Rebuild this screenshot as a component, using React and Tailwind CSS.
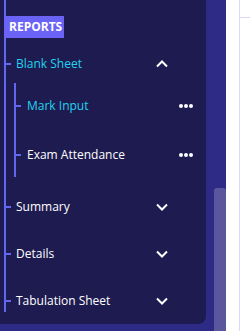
import React from "react";

const font = { fontFamily: '"Open Sans", "Noto Sans", sans-serif' };

const ChevronUp = () => (
  <svg width="12" height="8" viewBox="0 0 12 8" fill="none">
    <path d="M1 6.5 L6 1.5 L11 6.5" stroke="white" strokeWidth="2" />
  </svg>
);

const ChevronDown = () => (
  <svg width="12" height="8" viewBox="0 0 12 8" fill="none">
    <path d="M1 1.5 L6 6.5 L11 1.5" stroke="white" strokeWidth="2" />
  </svg>
);

const Dots = () => (
  <div className="flex items-center gap-[1px]">
    <span className="w-[4px] h-[4px] rounded-full bg-white" />
    <span className="w-[4px] h-[4px] rounded-full bg-white" />
    <span className="w-[4px] h-[4px] rounded-full bg-white" />
  </div>
);

const TopRow = ({ label, active, open, className }) => (
  <div className={"flex items-center h-[22px] w-[168px] " + className}>
    <span className="w-[5px] h-[2px] bg-[#6366f1]" />
    <span
      className={
        "ml-[5px] text-[12px] leading-none " +
        (active ? "text-[#22d3ee]" : "text-white")
      }
    >
      {label}
    </span>
    <div className="ml-auto w-[24px] flex justify-center">
      {open ? <ChevronUp /> : <ChevronDown />}
    </div>
  </div>
);

const SubRow = ({ label, active, className }) => (
  <div className={"flex items-center h-[22px] w-[177px] " + className}>
    <span className="w-[5px] h-[2px] bg-[#6366f1]" />
    <span
      className={
        "ml-[6px] text-[12px] leading-none " +
        (active ? "text-[#22d3ee]" : "text-white")
      }
    >
      {label}
    </span>
    <div className="ml-auto">
      <Dots />
    </div>
  </div>
);

export default function App() {
  return (
    <div className="flex w-[250px] h-[331px] overflow-hidden" style={font}>
      <div className="flex w-[226px] h-full bg-[#2e2b87]">
        <div className="w-[206px] h-[324px] bg-[#1e1b50] rounded-br-lg pl-[4px]">
          <div className="border-l-2 border-[#6366f1] pt-[16px]">
            <div className="-ml-[2px] w-[60px] h-[22px] bg-[#6b63f5] flex items-center pl-[5px]">
              <span className="text-white text-[12px] font-bold leading-none">REPORTS</span>
            </div>
            <TopRow label="Blank Sheet" active open className="mt-[15px]" />
            <div className="ml-[8px] mt-[8px] border-l-2 border-[#6366f1] pt-[12px] pb-[11px]">
              <SubRow label="Mark Input" active />
              <SubRow label="Exam Attendance" className="mt-[27px]" />
            </div>
            <TopRow label="Summary" className="mt-[19px]" />
            <TopRow label="Details" className="mt-[25px]" />
            <TopRow label="Tabulation Sheet" className="mt-[25px]" />
          </div>
        </div>
        <div className="flex-1 flex flex-col pl-[8px]">
          <div className="mt-[188px] flex-1 bg-[#5a579c] rounded-t-[3px]" />
        </div>
      </div>
      <div className="flex-1 bg-white pl-[13px]">
        <div className="h-full border-l border-[#ddd6fe] flex flex-col">
          <div className="mt-[17px] border-t border-[#ddd6fe]" />
        </div>
      </div>
    </div>
  );
}
